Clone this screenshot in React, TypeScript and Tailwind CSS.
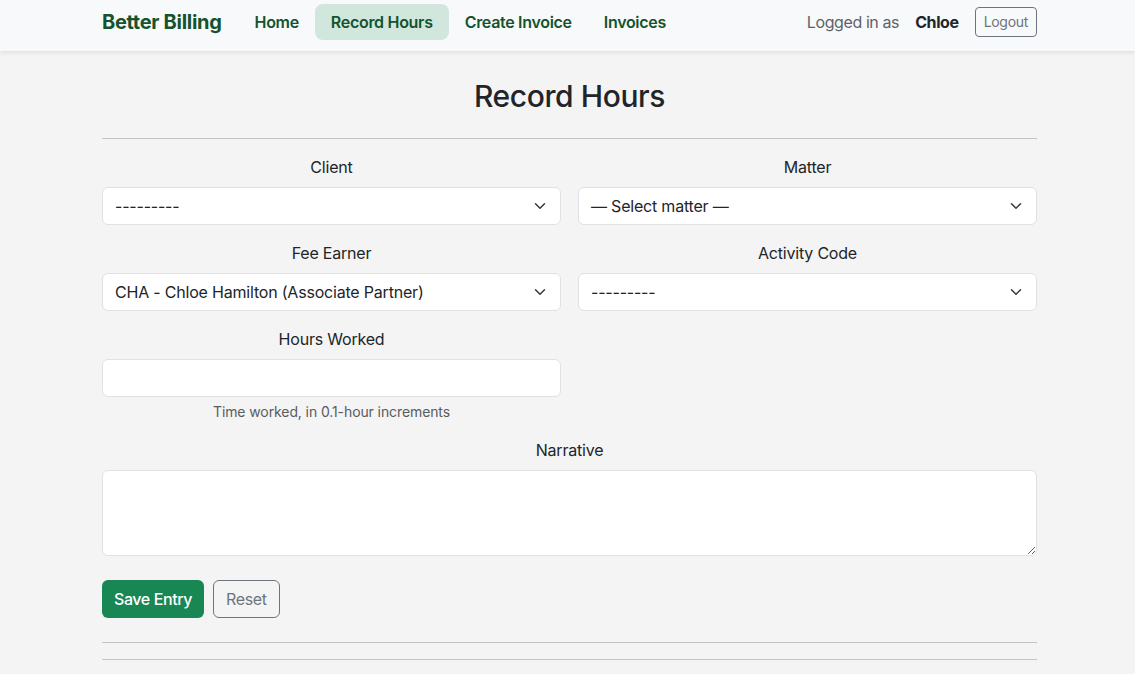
import React from 'react';

const Chevron = () => (
  <svg className="w-4 h-3 shrink-0" viewBox="0 0 16 16" fill="none" stroke="#343a40" strokeWidth="2" strokeLinecap="round" strokeLinejoin="round">
    <path d="m2 5 6 6 6-6" />
  </svg>
);

const Field: React.FC<{ label: string; children: React.ReactNode }> = ({ label, children }) => (
  <div className="flex flex-col">
    <label className="mb-2 text-center text-base leading-6 text-[#212529]">{label}</label>
    {children}
  </div>
);

const FakeSelect: React.FC<{ value: string }> = ({ value }) => (
  <div className="flex h-[38px] items-center justify-between rounded-md border border-[#dee2e6] bg-white pl-3 pr-3 text-base text-[#212529]">
    <span>{value}</span>
    <Chevron />
  </div>
);

export default function App() {
  return (
    <div className="min-h-screen bg-[#f4f4f4] font-['Inter',sans-serif] tracking-[-0.2px] text-[#212529]">
      <nav className="h-[51px] bg-[#f8f9fa] shadow-[0_2px_4px_rgba(0,0,0,0.08)]">
        <div className="ml-[102px] flex h-full w-[935px] items-center pb-[7px]">
          <span className="text-[20px] font-bold tracking-[-0.3px] text-[#14532d]">Better Billing</span>
          <div className="ml-[17px] flex items-center text-base font-semibold tracking-[-0.3px] text-[#14532d]">
            <a className="px-4 py-[6px]">Home</a>
            <a className="rounded-lg bg-[#d1e7dd] px-4 py-[6px]">Record Hours</a>
            <a className="px-4 py-[6px]">Create Invoice</a>
            <a className="px-4 py-[6px]">Invoices</a>
          </div>
          <div className="ml-auto flex items-center">
            <span className="text-base tracking-[-0.4px] text-[#5c636a]">Logged in as</span>
            <span className="ml-4 text-base font-bold tracking-[-0.4px] text-[#212529]">Chloe</span>
            <button className="ml-4 h-[30px] rounded border border-[#6c757d] px-[8px] text-sm tracking-[-0.3px] text-[#6c757d]">Logout</button>
          </div>
        </div>
      </nav>

      <main className="ml-[102px] w-[935px] pt-[27px]">
        <h1 className="text-center text-[30px] font-medium leading-[1.2] tracking-[-0.4px]">Record Hours</h1>
        <hr className="mt-[24px] border-t border-[#c4c4c4]" />

        <div className="mt-4 grid grid-cols-2 gap-x-[17px] gap-y-4">
          <Field label="Client">
            <FakeSelect value="---------" />
          </Field>
          <Field label="Matter">
            <FakeSelect value="— Select matter —" />
          </Field>
          <Field label="Fee Earner">
            <FakeSelect value="CHA - Chloe Hamilton (Associate Partner)" />
          </Field>
          <Field label="Activity Code">
            <FakeSelect value="---------" />
          </Field>
          <Field label="Hours Worked">
            <input className="h-[38px] rounded-md border border-[#dee2e6] bg-white px-3" />
            <p className="mt-1 text-center text-sm leading-[21px] tracking-[-0.1px] text-[#595c5f]">Time worked, in 0.1-hour increments</p>
          </Field>
        </div>

        <div className="mt-4">
          <Field label="Narrative">
            <textarea className="block h-[86px] w-full rounded-md border border-[#dee2e6] bg-white px-3 py-2" />
          </Field>
        </div>

        <div className="mt-6 flex gap-[9px]">
          <button className="h-[38px] rounded-md bg-[#198754] px-3 text-base font-medium tracking-[-0.4px] text-white">Save Entry</button>
          <button className="h-[38px] rounded-md border border-[#6c757d] px-3 text-base tracking-[-0.4px] text-[#6c757d]">Reset</button>
        </div>

        <hr className="mt-[24px] border-t border-[#c4c4c4]" />
        <hr className="mt-4 border-t border-[#c4c4c4]" />
      </main>
    </div>
  );
}
